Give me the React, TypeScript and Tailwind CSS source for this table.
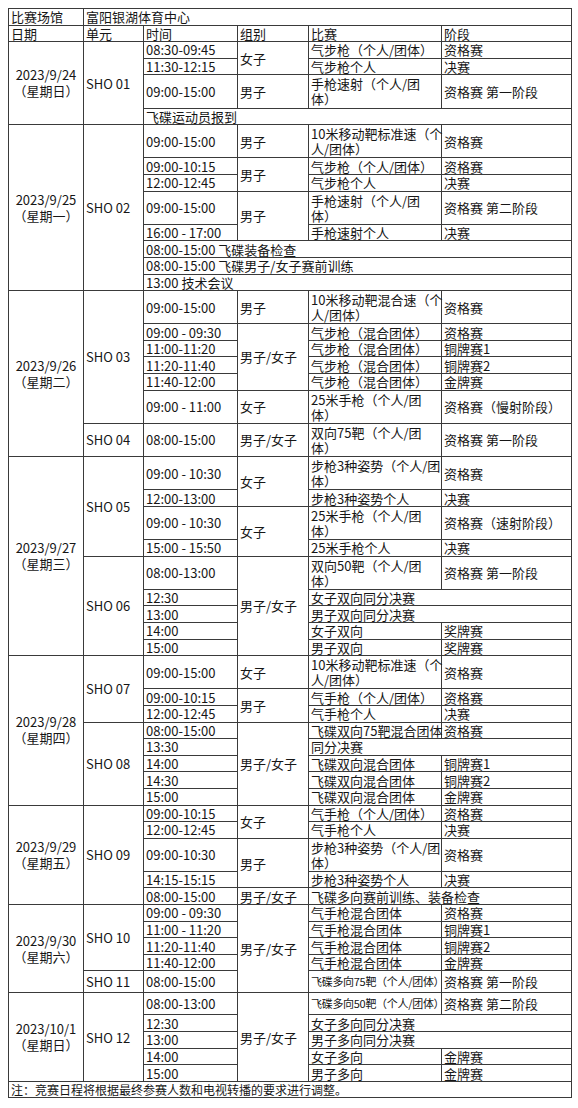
import type { ReactNode } from "react";

const cell = "border border-[#3a3a3a] px-[2px] py-0 align-middle whitespace-nowrap overflow-visible";

type TdProps = {
  children?: ReactNode;
  rowSpan?: number;
  colSpan?: number;
  center?: boolean;
  small?: boolean;
};

function Td({ children, rowSpan, colSpan, center, small }: TdProps) {
  return (
    <td
      rowSpan={rowSpan}
      colSpan={colSpan}
      className={`${cell} ${center ? "text-center leading-[16px]" : "text-left"} ${small ? "text-[11px] tracking-[-0.3px]" : ""}`}
    >
      {children}
    </td>
  );
}

// row heights
const S = "h-[16.6px]";
const D = "h-[33.2px]";
const O = "h-[22px]";

function DateCell({ rows, date, week }: { rows: number; date: string; week: string }) {
  return (
    <Td rowSpan={rows} center>
      {date}
      <br />
      {week}
    </Td>
  );
}

export default function App() {
  return (
    <div className="min-h-screen bg-white pt-[8px] pl-[8px] text-[#161616] font-['Noto_Sans_CJK_SC','Noto_Sans',sans-serif]">
      <table className="table-fixed border-collapse w-[563px] text-[13px] leading-[15px]">
        <colgroup>
          <col className="w-[75px]" />
          <col className="w-[60px]" />
          <col className="w-[94px]" />
          <col className="w-[71px]" />
          <col className="w-[133px]" />
          <col className="w-[130px]" />
        </colgroup>
        <tbody>
          <tr className={S}>
            <Td>比赛场馆</Td>
            <Td colSpan={5}>富阳银湖体育中心</Td>
          </tr>
          <tr className={S}>
            <Td>日期</Td>
            <Td>单元</Td>
            <Td>时间</Td>
            <Td>组别</Td>
            <Td>比赛</Td>
            <Td>阶段</Td>
          </tr>

          {/* 9/24 */}
          <tr className={S}>
            <DateCell rows={4} date="2023/9/24" week="（星期日）" />
            <Td rowSpan={4}>SHO 01</Td>
            <Td>08:30-09:45</Td>
            <Td rowSpan={2}>女子</Td>
            <Td>气步枪（个人/团体）</Td>
            <Td>资格赛</Td>
          </tr>
          <tr className={S}>
            <Td>11:30-12:15</Td>
            <Td>气步枪个人</Td>
            <Td>决赛</Td>
          </tr>
          <tr className={D}>
            <Td>09:00-15:00</Td>
            <Td>男子</Td>
            <Td>手枪速射（个人/团<br />体）</Td>
            <Td>资格赛 第一阶段</Td>
          </tr>
          <tr className={S}>
            <Td colSpan={4}>飞碟运动员报到</Td>
          </tr>

          {/* 9/25 */}
          <tr className={D}>
            <DateCell rows={8} date="2023/9/25" week="（星期一）" />
            <Td rowSpan={8}>SHO 02</Td>
            <Td>09:00-15:00</Td>
            <Td>男子</Td>
            <Td>10米移动靶标准速（个<br />人/团体）</Td>
            <Td>资格赛</Td>
          </tr>
          <tr className={S}>
            <Td>09:00-10:15</Td>
            <Td rowSpan={2}>男子</Td>
            <Td>气步枪（个人/团体）</Td>
            <Td>资格赛</Td>
          </tr>
          <tr className={S}>
            <Td>12:00-12:45</Td>
            <Td>气步枪个人</Td>
            <Td>决赛</Td>
          </tr>
          <tr className={D}>
            <Td>09:00-15:00</Td>
            <Td rowSpan={2}>男子</Td>
            <Td>手枪速射（个人/团<br />体）</Td>
            <Td>资格赛 第二阶段</Td>
          </tr>
          <tr className={S}>
            <Td>16:00 - 17:00</Td>
            <Td>手枪速射个人</Td>
            <Td>决赛</Td>
          </tr>
          <tr className={S}>
            <Td colSpan={4}>08:00-15:00 飞碟装备检查</Td>
          </tr>
          <tr className={S}>
            <Td colSpan={4}>08:00-15:00 飞碟男子/女子赛前训练</Td>
          </tr>
          <tr className={S}>
            <Td colSpan={4}>13:00 技术会议</Td>
          </tr>

          {/* 9/26 */}
          <tr className={D}>
            <DateCell rows={7} date="2023/9/26" week="（星期二）" />
            <Td rowSpan={6}>SHO 03</Td>
            <Td>09:00-15:00</Td>
            <Td>男子</Td>
            <Td>10米移动靶混合速（个<br />人/团体）</Td>
            <Td>资格赛</Td>
          </tr>
          <tr className={S}>
            <Td>09:00 - 09:30</Td>
            <Td rowSpan={4}>男子/女子</Td>
            <Td>气步枪（混合团体）</Td>
            <Td>资格赛</Td>
          </tr>
          <tr className={S}>
            <Td>11:00-11:20</Td>
            <Td>气步枪（混合团体）</Td>
            <Td>铜牌赛1</Td>
          </tr>
          <tr className={S}>
            <Td>11:20-11:40</Td>
            <Td>气步枪（混合团体）</Td>
            <Td>铜牌赛2</Td>
          </tr>
          <tr className={S}>
            <Td>11:40-12:00</Td>
            <Td>气步枪（混合团体）</Td>
            <Td>金牌赛</Td>
          </tr>
          <tr className={D}>
            <Td>09:00 - 11:00</Td>
            <Td>女子</Td>
            <Td>25米手枪（个人/团<br />体）</Td>
            <Td>资格赛（慢射阶段）</Td>
          </tr>
          <tr className={D}>
            <Td>SHO 04</Td>
            <Td>08:00-15:00</Td>
            <Td>男子/女子</Td>
            <Td>双向75靶（个人/团<br />体）</Td>
            <Td>资格赛 第一阶段</Td>
          </tr>

          {/* 9/27 */}
          <tr className={D}>
            <DateCell rows={9} date="2023/9/27" week="（星期三）" />
            <Td rowSpan={4}>SHO 05</Td>
            <Td>09:00 - 10:30</Td>
            <Td rowSpan={2}>女子</Td>
            <Td>步枪3种姿势（个人/团<br />体）</Td>
            <Td>资格赛</Td>
          </tr>
          <tr className={S}>
            <Td>12:00-13:00</Td>
            <Td>步枪3种姿势个人</Td>
            <Td>决赛</Td>
          </tr>
          <tr className={D}>
            <Td>09:00 - 10:30</Td>
            <Td rowSpan={2}>女子</Td>
            <Td>25米手枪（个人/团<br />体）</Td>
            <Td>资格赛（速射阶段）</Td>
          </tr>
          <tr className={S}>
            <Td>15:00 - 15:50</Td>
            <Td>25米手枪个人</Td>
            <Td>决赛</Td>
          </tr>
          <tr className={D}>
            <Td rowSpan={5}>SHO 06</Td>
            <Td>08:00-13:00</Td>
            <Td rowSpan={5}>男子/女子</Td>
            <Td>双向50靶（个人/团<br />体）</Td>
            <Td>资格赛 第一阶段</Td>
          </tr>
          <tr className={S}>
            <Td>12:30</Td>
            <Td colSpan={2}>女子双向同分决赛</Td>
          </tr>
          <tr className={S}>
            <Td>13:00</Td>
            <Td colSpan={2}>男子双向同分决赛</Td>
          </tr>
          <tr className={S}>
            <Td>14:00</Td>
            <Td>女子双向</Td>
            <Td>奖牌赛</Td>
          </tr>
          <tr className={S}>
            <Td>15:00</Td>
            <Td>男子双向</Td>
            <Td>奖牌赛</Td>
          </tr>

          {/* 9/28 */}
          <tr className={D}>
            <DateCell rows={8} date="2023/9/28" week="（星期四）" />
            <Td rowSpan={3}>SHO 07</Td>
            <Td>09:00-15:00</Td>
            <Td>女子</Td>
            <Td>10米移动靶标准速（个<br />人/团体）</Td>
            <Td>资格赛</Td>
          </tr>
          <tr className={S}>
            <Td>09:00-10:15</Td>
            <Td rowSpan={2}>男子</Td>
            <Td>气手枪（个人/团体）</Td>
            <Td>资格赛</Td>
          </tr>
          <tr className={S}>
            <Td>12:00-12:45</Td>
            <Td>气手枪个人</Td>
            <Td>决赛</Td>
          </tr>
          <tr className={S}>
            <Td rowSpan={5}>SHO 08</Td>
            <Td>08:00-15:00</Td>
            <Td rowSpan={5}>男子/女子</Td>
            <Td>飞碟双向75靶混合团体</Td>
            <Td>资格赛</Td>
          </tr>
          <tr className={S}>
            <Td>13:30</Td>
            <Td colSpan={2}>同分决赛</Td>
          </tr>
          <tr className={S}>
            <Td>14:00</Td>
            <Td>飞碟双向混合团体</Td>
            <Td>铜牌赛1</Td>
          </tr>
          <tr className={S}>
            <Td>14:30</Td>
            <Td>飞碟双向混合团体</Td>
            <Td>铜牌赛2</Td>
          </tr>
          <tr className={S}>
            <Td>15:00</Td>
            <Td>飞碟双向混合团体</Td>
            <Td>金牌赛</Td>
          </tr>

          {/* 9/29 */}
          <tr className={S}>
            <DateCell rows={5} date="2023/9/29" week="（星期五）" />
            <Td rowSpan={5}>SHO 09</Td>
            <Td>09:00-10:15</Td>
            <Td rowSpan={2}>女子</Td>
            <Td>气手枪（个人/团体）</Td>
            <Td>资格赛</Td>
          </tr>
          <tr className={S}>
            <Td>12:00-12:45</Td>
            <Td>气手枪个人</Td>
            <Td>决赛</Td>
          </tr>
          <tr className={D}>
            <Td>09:00-10:30</Td>
            <Td rowSpan={2}>男子</Td>
            <Td>步枪3种姿势（个人/团<br />体）</Td>
            <Td>资格赛</Td>
          </tr>
          <tr className={S}>
            <Td>14:15-15:15</Td>
            <Td>步枪3种姿势个人</Td>
            <Td>决赛</Td>
          </tr>
          <tr className={S}>
            <Td>08:00-15:00</Td>
            <Td>男子/女子</Td>
            <Td colSpan={2}>飞碟多向赛前训练、装备检查</Td>
          </tr>

          {/* 9/30 */}
          <tr className={S}>
            <DateCell rows={5} date="2023/9/30" week="（星期六）" />
            <Td rowSpan={4}>SHO 10</Td>
            <Td>09:00 - 09:30</Td>
            <Td rowSpan={5}>男子/女子</Td>
            <Td>气手枪混合团体</Td>
            <Td>资格赛</Td>
          </tr>
          <tr className={S}>
            <Td>11:00 - 11:20</Td>
            <Td>气手枪混合团体</Td>
            <Td>铜牌赛1</Td>
          </tr>
          <tr className={S}>
            <Td>11:20-11:40</Td>
            <Td>气手枪混合团体</Td>
            <Td>铜牌赛2</Td>
          </tr>
          <tr className={S}>
            <Td>11:40-12:00</Td>
            <Td>气手枪混合团体</Td>
            <Td>金牌赛</Td>
          </tr>
          <tr className={O}>
            <Td>SHO 11</Td>
            <Td>08:00-15:00</Td>
            <Td small>飞碟多向75靶（个人/团体）</Td>
            <Td>资格赛 第一阶段</Td>
          </tr>

          {/* 10/1 */}
          <tr className={O}>
            <DateCell rows={5} date="2023/10/1" week="（星期日）" />
            <Td rowSpan={5}>SHO 12</Td>
            <Td>08:00-13:00</Td>
            <Td rowSpan={5}>男子/女子</Td>
            <Td small>飞碟多向50靶（个人/团体）</Td>
            <Td>资格赛 第二阶段</Td>
          </tr>
          <tr className={S}>
            <Td>12:30</Td>
            <Td colSpan={2}>女子多向同分决赛</Td>
          </tr>
          <tr className={S}>
            <Td>13:00</Td>
            <Td colSpan={2}>男子多向同分决赛</Td>
          </tr>
          <tr className={S}>
            <Td>14:00</Td>
            <Td>女子多向</Td>
            <Td>金牌赛</Td>
          </tr>
          <tr className={S}>
            <Td>15:00</Td>
            <Td>男子多向</Td>
            <Td>金牌赛</Td>
          </tr>

          <tr className={S}>
            <td colSpan={6} className={`${cell} text-left text-[12px]`}>
              注：竞赛日程将根据最终参赛人数和电视转播的要求进行调整。
            </td>
          </tr>
        </tbody>
      </table>
    </div>
  );
}
